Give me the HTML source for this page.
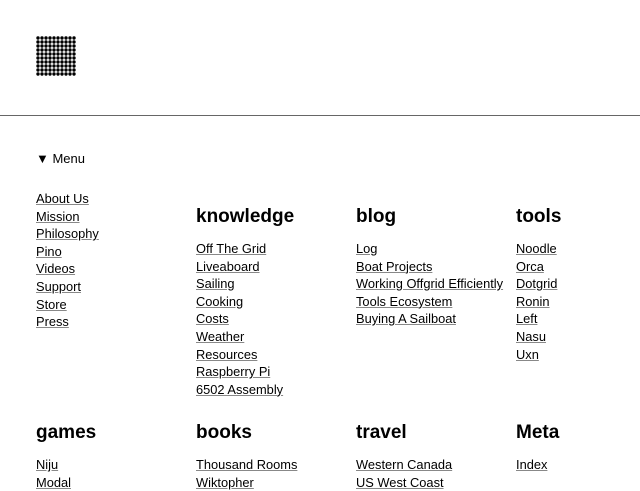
<!DOCTYPE html>
<html><head><meta charset="utf-8"><style>
html,body{margin:0;padding:0;background:#fff;width:640px;height:480px;overflow:hidden;font-family:"Liberation Sans",Arial,sans-serif;color:#000}
.hr{position:absolute;left:0;top:115px;width:640px;height:1px;background:#666}
.col{position:absolute;font-size:12.85px;line-height:17.6px}
.col a{display:block;color:#000;text-decoration:underline;text-decoration-color:#888;white-space:nowrap}
h2{position:absolute;margin:0;font-size:19px;font-weight:bold;line-height:22px}
.menu{position:absolute;left:36px;top:151px;font-size:13px}
</style></head><body>
<svg style="position:absolute;left:36px;top:36px" width="40" height="40">
<defs><pattern id="p" width="4" height="4" patternUnits="userSpaceOnUse"><circle cx="2" cy="2" r="1.7" fill="#000"/></pattern></defs>
<rect width="40" height="40" fill="url(#p)"/>
</svg>
<div class="hr"></div>
<div class="menu">▼ Menu</div>

<div class="col" style="left:36px;top:190px">
<a>About Us</a><a>Mission</a><a>Philosophy</a><a>Pino</a><a>Videos</a><a>Support</a><a>Store</a><a>Press</a></div>

<h2 style="left:196px;top:206px">knowledge</h2>
<h2 style="left:356px;top:206px">blog</h2>
<h2 style="left:516px;top:206px">tools</h2>

<div class="col" style="left:196px;top:240px">
<a>Off The Grid</a><a>Liveaboard</a><a>Sailing</a><a>Cooking</a><a>Costs</a><a>Weather</a><a>Resources</a><a>Raspberry Pi</a><a>6502 Assembly</a></div>
<div class="col" style="left:356px;top:240px">
<a>Log</a><a>Boat Projects</a><a>Working Offgrid Efficiently</a><a>Tools Ecosystem</a><a>Buying A Sailboat</a></div>
<div class="col" style="left:516px;top:240px">
<a>Noodle</a><a>Orca</a><a>Dotgrid</a><a>Ronin</a><a>Left</a><a>Nasu</a><a>Uxn</a></div>

<h2 style="left:36px;top:422px">games</h2>
<h2 style="left:196px;top:422px">books</h2>
<h2 style="left:356px;top:422px">travel</h2>
<h2 style="left:516px;top:422px">Meta</h2>

<div class="col" style="left:36px;top:456px"><a>Niju</a><a>Modal</a></div>
<div class="col" style="left:196px;top:456px"><a>Thousand Rooms</a><a>Wiktopher</a></div>
<div class="col" style="left:356px;top:456px"><a>Western Canada</a><a>US West Coast</a></div>
<div class="col" style="left:516px;top:456px"><a>Index</a></div>
</body></html>
